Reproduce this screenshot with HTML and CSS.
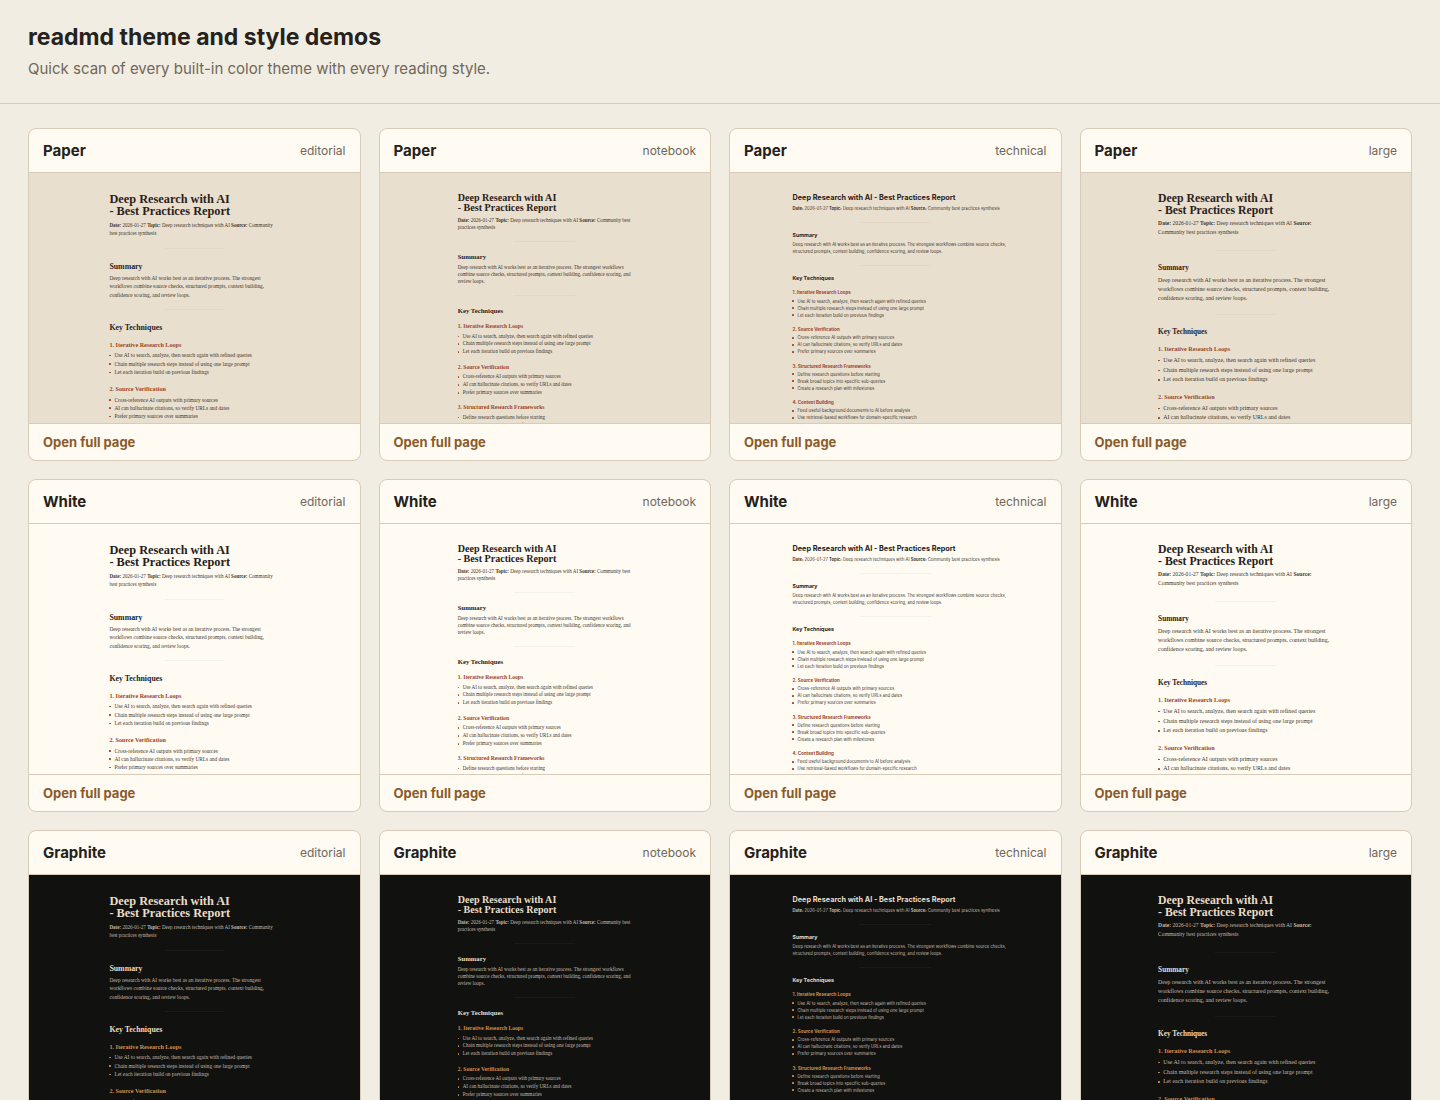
FILE: index.html
```
<!DOCTYPE html>
<html lang="en">
<head>
    <meta charset="UTF-8">
    <meta name="viewport" content="width=device-width, initial-scale=1.0">
    <title>readmd theme and style demos</title>
    <link rel="stylesheet" href="styles.css">
</head>
<body>
    <header class="top">
        <h1>readmd theme and style demos</h1>
        <p>Quick scan of every built-in color theme with every reading style.</p>
    </header>
    <main class="grid" id="grid"></main>

    <template id="cardTemplate">
        <article class="card">
            <div class="card-head">
                <h2 class="theme-name"></h2>
                <span class="style-name"></span>
            </div>
            <div class="preview">
                <div class="doc">
                    <h3>Deep Research with AI - Best Practices Report</h3>
                    <p class="meta"><strong>Date:</strong> 2026-01-27 <strong>Topic:</strong> Deep research techniques with AI <strong>Source:</strong> Community best practices synthesis</p>
                    <hr>
                    <h4>Summary</h4>
                    <p>Deep research with AI works best as an iterative process. The strongest workflows combine source checks, structured prompts, context building, confidence scoring, and review loops.</p>
                    <hr>
                    <h4>Key Techniques</h4>
                    <h5>1. Iterative Research Loops</h5>
                    <ul>
                        <li>Use AI to search, analyze, then search again with refined queries</li>
                        <li>Chain multiple research steps instead of using one large prompt</li>
                        <li>Let each iteration build on previous findings</li>
                    </ul>
                    <h5>2. Source Verification</h5>
                    <ul>
                        <li>Cross-reference AI outputs with primary sources</li>
                        <li>AI can hallucinate citations, so verify URLs and dates</li>
                        <li>Prefer primary sources over summaries</li>
                    </ul>
                    <h5>3. Structured Research Frameworks</h5>
                    <ul>
                        <li>Define research questions before starting</li>
                        <li>Break broad topics into specific sub-queries</li>
                        <li>Create a research plan with milestones</li>
                    </ul>
                    <h5>4. Context Building</h5>
                    <ul>
                        <li>Feed useful background documents to AI before analysis</li>
                        <li>Use retrieval-based workflows for domain-specific research</li>
                    </ul>
                </div>
            </div>
            <div class="card-foot">
                <a href="#">Open full page</a>
            </div>
        </article>
    </template>
    <script src="script.js"></script>
</body>
</html>
```
FILE: styles.css
```
*{
    box-sizing: border-box;
}
body{
    margin: 0;
    background-color: #f2ede2;
    color: #25211b;
    font-family: Inter, "Liberation Sans", sans-serif;
}
.top{
    padding: 23px 28px 22px;
    border-bottom: 1px solid #d8cbb8;
}
.top h1{
    margin: 0 0 6px;
    font-size: 23px;
    line-height: 28px;
}
.top p{
    margin: 0;
    font-size: 15px;
    line-height: 24px;
    color: #6f675b;
}
.grid{
    display: grid;
    grid-template-columns: repeat(auto-fill, minmax(320px, 1fr));
    gap: 18px;
    padding: 24px 28px;
}
.card{
    overflow: hidden;
    border: 1px solid #d8cbb8;
    border-radius: 8px;
    background-color: #fffaf2;
}
.card-head{
    display: flex;
    justify-content: space-between;
    align-items: center;
    padding: 12px 14px;
    border-bottom: 1px solid #d8cbb8;
}
.card-head h2{
    margin: 0;
    font-size: 15px;
    line-height: 19px;
}
.style-name{
    font-size: 12px;
    line-height: 19px;
    color: #6f675b;
}
.card-foot{
    padding: 9px 14px;
    border-top: 1px solid #d8cbb8;
    font-size: 13px;
    line-height: 18px;
}
.card-foot a{
    color: #8b5a2b;
    font-weight: 700;
    text-decoration: none;
}

/* page thumbnails */
.preview{
    height: 250px;
    overflow: hidden;
    background-color: var(--bg);
    color: var(--ink);
}
.doc{
    zoom: 0.28;
    margin: 0 auto;
    padding-top: 72px;
    font-family: "Liberation Serif", serif;
}
.doc h3, .doc h4, .doc h5, .doc p, .doc ul{
    margin: 0;
}
.doc h3{
    text-wrap: balance;
    color: var(--heading);
}
.doc h4{
    color: var(--heading);
}
.doc h5{
    color: var(--accent);
}
.doc hr{
    width: 35%;
    height: 4px;
    border: none;
    background-color: var(--rule);
}
.doc ul{
    padding: 0;
    list-style: none;
}
.doc li{
    display: flex;
    align-items: center;
    gap: 12px;
}
.doc li::before{
    content: "";
    width: 6px;
    height: 6px;
    border-radius: 50%;
    background-color: var(--accent);
}

.paper{
    --bg: #e9dfce;
    --ink: #40362c;
    --heading: #2b221b;
    --accent: #9c4526;
    --rule: #e3d8c6;
}
.white{
    --bg: #fffaf2;
    --ink: #40392f;
    --heading: #25211b;
    --accent: #9c4526;
    --rule: #f6f0e7;
}
.graphite{
    --bg: #11110f;
    --ink: #c4b9a8;
    --heading: #e8dcc8;
    --accent: #d0904e;
    --rule: #1b1a17;
}

.editorial{
    width: 606px;
    font-size: 19px;
    line-height: 29px;
}
.editorial h3{
    font-size: 44px;
    line-height: 43px;
    margin-bottom: 17px;
}
.editorial .meta{
    font-size: 18px;
}
.editorial hr{
    margin: 36px auto 46px;
}
.editorial h4{
    font-size: 28px;
    line-height: 34px;
    margin-bottom: 9px;
}
.editorial h5{
    font-size: 22px;
    line-height: 28px;
    margin-top: 33px;
    margin-bottom: 7px;
}
.editorial li{
    line-height: 30px;
}

.notebook{
    width: 622px;
    font-size: 18px;
    line-height: 25px;
}
.notebook h3{
    font-size: 36px;
    line-height: 34px;
    margin-bottom: 18px;
}
.notebook hr{
    margin: 36px auto 38px;
}
.notebook h4{
    font-size: 24px;
    line-height: 30px;
    margin-bottom: 10px;
}
.notebook h5{
    font-size: 20px;
    line-height: 26px;
    margin-top: 28px;
    margin-bottom: 7px;
}
.notebook li{
    line-height: 28px;
}

.technical{
    width: 734px;
    font-family: Inter, "Liberation Sans", sans-serif;
    font-size: 15px;
    line-height: 25px;
}
.technical h3{
    font-size: 26px;
    line-height: 38px;
    margin-bottom: 6px;
}
.technical p{
    margin-right: -40px;
}
.technical hr{
    margin: 34px auto 31px;
}
.technical h4{
    font-size: 19px;
    line-height: 26px;
    margin-bottom: 8px;
}
.technical h5{
    font-size: 16px;
    line-height: 24px;
    margin-top: 30px;
    margin-bottom: 2px;
}
.technical li{
    line-height: 25px;
}

.large{
    width: 626px;
    font-size: 21px;
    line-height: 32px;
}
.large h3{
    font-size: 42px;
    line-height: 41px;
    margin-bottom: 12px;
}
.large .meta{
    font-size: 20px;
    line-height: 29px;
    padding-bottom: 10px;
}
.large hr{
    margin: 40px auto 46px;
}
.large h4{
    font-size: 26px;
    line-height: 34px;
    margin-bottom: 9px;
}
.large h5{
    font-size: 22px;
    line-height: 28px;
    margin-top: 32px;
    margin-bottom: 6px;
}
.large li{
    line-height: 35px;
}
```
FILE: script.js
```
const themes = ["Paper", "White", "Graphite"];
const styles = ["editorial", "notebook", "technical", "large"];
const grid = document.getElementById("grid");
const template = document.getElementById("cardTemplate");

themes.forEach(theme => {
    styles.forEach(style => {
        const card = template.content.cloneNode(true);
        card.querySelector(".theme-name").textContent = theme;
        card.querySelector(".style-name").textContent = style;
        card.querySelector(".preview").classList.add(theme.toLowerCase());
        card.querySelector(".doc").classList.add(style);
        grid.appendChild(card);
    });
});
```
